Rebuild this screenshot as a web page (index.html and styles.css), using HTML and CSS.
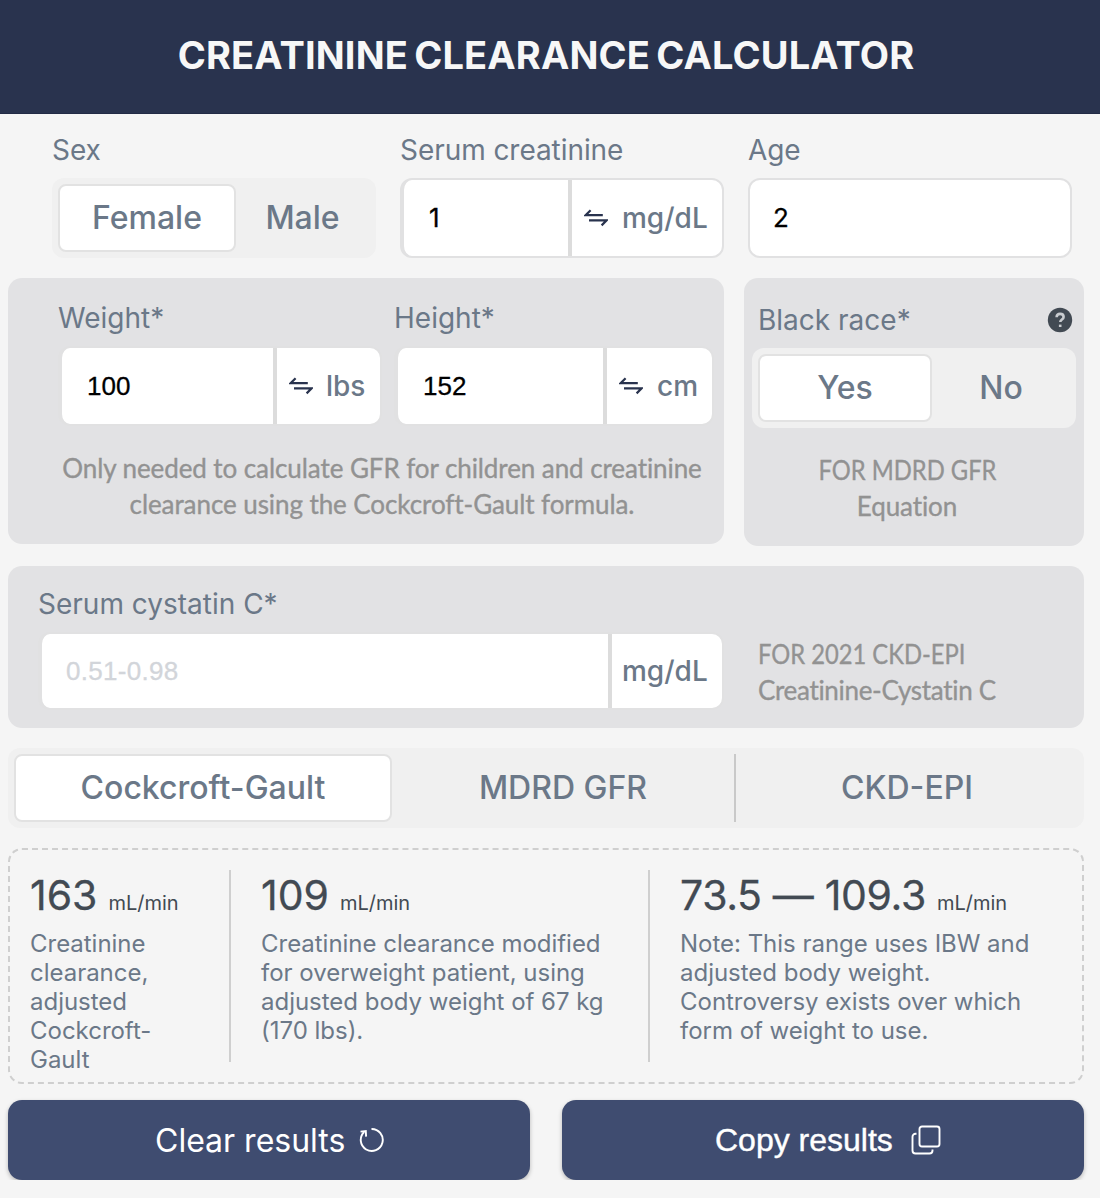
FILE: index.html
```
<!DOCTYPE html>
<html lang="en">
<head>
<meta charset="utf-8">
<title>Creatinine Clearance Calculator</title>
<link rel="stylesheet" href="styles.css">
</head>
<body>
<svg class="sprite" aria-hidden="true">
  <symbol id="swap" viewBox="0 0 24 18">
    <path d="M18.800 6.200H1.600L6.600 1.200" /><path d="M5 11.400h17.600l-5 5" />
  </symbol>
</svg>
<header class="header"><h1 class="title">CREATININE CLEARANCE CALCULATOR</h1></header>
<main class="main">
  <section class="row basics">
    <div class="field">
      <span class="label">Sex</span>
      <div class="segment sex"><button class="option active">Female</button><button class="option">Male</button></div>
    </div>
    <div class="field">
      <span class="label">Serum creatinine</span>
      <div class="combo"><span class="value">1</span><span class="unit unit-wide"><svg class="swap"><use href="#swap"/></svg>mg/dL</span></div>
    </div>
    <div class="field">
      <span class="label">Age</span>
      <div class="combo single"><span class="value">2</span></div>
    </div>
  </section>
  <section class="row panels">
    <div class="panel body-panel">
      <div class="measures">
        <div class="field weight">
          <span class="label">Weight*</span>
          <div class="combo"><span class="value">100</span><span class="unit unit-lbs"><svg class="swap"><use href="#swap"/></svg>lbs</span></div>
        </div>
        <div class="field height">
          <span class="label">Height*</span>
          <div class="combo"><span class="value">152</span><span class="unit unit-cm"><svg class="swap"><use href="#swap"/></svg>cm</span></div>
        </div>
      </div>
      <p class="note centered">Only needed to calculate GFR for children and creatinine<br>clearance using the Cockcroft-Gault formula.</p>
    </div>
    <div class="panel race-panel">
      <div class="race-head"><span class="label">Black race*</span>
        <svg class="help" viewBox="0 0 26 26"><circle cx="13" cy="13" r="12.2"/><path d="M9.600 10.200c.1-2 1.500-3.300 3.500-3.300 2.100 0 3.500 1.200 3.500 3 0 2.700-3.300 2.600-3.300 5.200"/><path d="M13.200 17.600v2.400"/></svg>
      </div>
      <div class="segment race"><button class="option active">Yes</button><button class="option">No</button></div>
      <p class="note centered"><span class="caps">FOR MDRD GFR</span><br>Equation</p>
    </div>
  </section>
  <section class="panel cystatin-panel">
    <div class="field cystatin">
      <span class="label">Serum cystatin C*</span>
      <div class="combo"><span class="value placeholder">0.51-0.98</span><span class="unit unit-cys">mg/dL</span></div>
    </div>
    <p class="note"><span class="caps caps-left">FOR 2021 CKD-EPI</span><br>Creatinine-Cystatin C</p>
  </section>
  <nav class="segment tabs">
    <button class="option active">Cockcroft-Gault</button><button class="option">MDRD GFR</button><button class="option last">CKD-EPI</button>
  </nav>
  <section class="results">
    <div class="result"><div class="amount"><span class="number">163</span><span class="measure">mL/min</span></div>
      <p class="desc">Creatinine<br>clearance,<br>adjusted<br>Cockcroft-<br>Gault</p></div>
    <div class="result"><div class="amount"><span class="number">109</span><span class="measure">mL/min</span></div>
      <p class="desc">Creatinine clearance modified<br>for overweight patient, using<br>adjusted body weight of 67 kg<br>(170 lbs).</p></div>
    <div class="result"><div class="amount"><span class="number range">73.5 — 109.3</span><span class="measure">mL/min</span></div>
      <p class="desc">Note: This range uses IBW and<br>adjusted body weight.<br>Controversy exists over which<br>form of weight to use.</p></div>
  </section>
  <div class="actions">
    <button class="action clear">Clear results<svg class="reset" viewBox="0 0 26 26"><path d="M12.500 2A11 11 0 1 1 5.200 5"/><path d="M1.500 4.600l5.300-.6.300 5.600"/></svg></button>
    <button class="action copy">Copy results<svg class="dup" viewBox="0 0 30 30"><rect x="8.500" y="1.500" width="20" height="20" rx="2.500"/><path d="M5.500 8.800H4.500a3 3 0 0 0-3 3v13.700a3 3 0 0 0 3 3h14a3 3 0 0 0 3-3v-1"/></svg></button>
  </div>
</main>
</body>
</html>
```
FILE: styles.css
```
* { box-sizing: border-box; }
body { margin: 0; background: #f5f5f5; color: #6b7888; font-family: Inter, "Liberation Sans", sans-serif; }
.sprite { display: none; }
p, h1 { margin: 0; }
button { font: inherit; color: inherit; border: 0; background: none; padding: 0; }
.header { height: 114px; background: #29334e; border-bottom: 1px solid #222b45; }
.title { width: 1092px; line-height: 111px; text-align: center; font-size: 38px; font-weight: 700; letter-spacing: .15px; word-spacing: -3px; color: #f7f7f7; white-space: nowrap; }
.main { width: 1084px; padding-left: 8px; }
.row { display: flex; }
.label { display: block; height: 36px; line-height: 36px; font-size: 28px; white-space: nowrap; }
.basics { padding: 18px 0 0 44px; gap: 24px; height: 164px; }
.basics .field { width: 324px; }
.basics .label { margin-bottom: 10px; letter-spacing: -.06px; }
.segment { display: flex; height: 80px; padding: 6px; border-radius: 12px; background: #f0f0f0; font-size: 32px; font-weight: 500; }
.option { height: 68px; line-height: 66px; border-radius: 8px; white-space: nowrap; }
.option.active { border: 2px solid #e2e2e2; background: #fff; line-height: 62px; }
.sex .active { width: 178px; }
.sex .option:last-child { width: 133px; }
.combo { display: flex; height: 80px; border: 2px solid #e1e1e2; border-left-width: 4px; border-radius: 12px; background: #fff; font-size: 28px; }
.combo.single { border-left-width: 2px; }
.value { flex: 1; padding-left: 25px; line-height: 76px; color: #000; font-family: "Liberation Sans", Arial, sans-serif; font-size: 26px; -webkit-text-stroke: .3px; }
.single .value { padding-left: 23px; }
.basics .value { font-family: Inter, sans-serif; }
.value.placeholder { padding-left: 24px; line-height: 74px; color: #d2d5da; letter-spacing: .3px; }
.unit { display: flex; align-items: center; border-left: 4px solid #dcdcdc; font-weight: 500; }
.swap { width: 24px; height: 18px; fill: none; stroke: #29334e; stroke-width: 2.2; }
.unit-wide { width: 154px; padding-left: 12px; gap: 14px; }
.unit-lbs { width: 107px; padding-left: 12px; gap: 13px; }
.unit-cm { width: 109px; padding-left: 12px; gap: 14px; }
.unit-cys { width: 114px; padding-left: 10px; }
.panels { gap: 20px; height: 288px; }
.panel { background: #e2e2e4; border-radius: 14px; }
.body-panel { width: 716px; height: 266px; padding: 22px 0 0 50px; }
.measures { display: flex; gap: 12px; }
.weight { width: 324px; }
.height { width: 320px; }
.measures .label { margin-bottom: 10px; }
.note { font-family: Lato, sans-serif; font-size: 26px; line-height: 36px; color: #929292; white-space: nowrap; letter-spacing: -.08px; font-variant-ligatures: none; -webkit-text-stroke: .35px; }
.caps { display: inline-block; letter-spacing: 0; transform: scaleX(.913); }
.caps-left { transform-origin: left; }
.centered { text-align: center; }
.body-panel .note { width: 648px; margin-top: 24px; }
.race-panel { width: 340px; height: 268px; padding: 24px 8px 0; }
.race-head { display: flex; justify-content: space-between; align-items: center; padding: 0 3px 0 6px; margin-bottom: 10px; }
.help { width: 26px; height: 26px; }
.help circle { fill: #424a53; }
.help path { fill: none; stroke: #c9ccd0; stroke-width: 2.6; }
.race .active { width: 174px; }
.race .option:last-child { width: 138px; }
.race-panel .note { margin: 24px 14px 0 0; }
.cystatin-panel { display: flex; height: 162px; padding: 20px 0 0 30px; }
.cystatin { width: 686px; }
.cystatin .label { margin-bottom: 10px; }
.cystatin .combo { height: 78px; }
.cystatin-panel .note { margin: 50px 0 0 34px; letter-spacing: -.32px; }
.tabs { margin-top: 20px; }
.tabs .option { width: 342px; }
.tabs .option.active { width: 378px; }
.tabs .option.last { border-left: 2px solid #c9c9c9; border-radius: 0; width: 344px; }
.results { display: flex; height: 236px; margin-top: 20px; padding: 20px 0 0 20px; border: 2px dashed #cfcfcf; border-radius: 14px; }
.result { height: 192px; width: 419px; padding-left: 30px; border-left: 2px solid #cfcfcf; }
.result:first-child { width: 199px; padding-left: 0; border-left: 0; }
.amount { display: flex; align-items: baseline; height: 59px; line-height: 50px; gap: 11px; color: #424a53; white-space: nowrap; }
.number { font-size: 41px; -webkit-text-stroke: .3px; }
.range { letter-spacing: -.35px; }
.measure { font-size: 20px; }
.desc { font-size: 24px; line-height: 29px; letter-spacing: -.02px; white-space: nowrap; }
.actions { display: flex; gap: 32px; margin-top: 16px; }
.action { display: flex; align-items: center; width: 522px; height: 80px; border-radius: 14px; background: #3f4c70; color: #fff; font-size: 32px; white-space: nowrap; box-shadow: 0 2px 4px rgba(0,0,0,.25); }
.action svg { fill: none; stroke: #fff; stroke-width: 1.9; }
.clear { padding-left: 147px; gap: 14px; }
.copy { padding-left: 153px; gap: 18px; font-family: "Liberation Sans", Arial, sans-serif; -webkit-text-stroke: .4px; }
.reset { width: 26px; height: 26px; }
.dup { width: 30px; height: 30px; }
```
